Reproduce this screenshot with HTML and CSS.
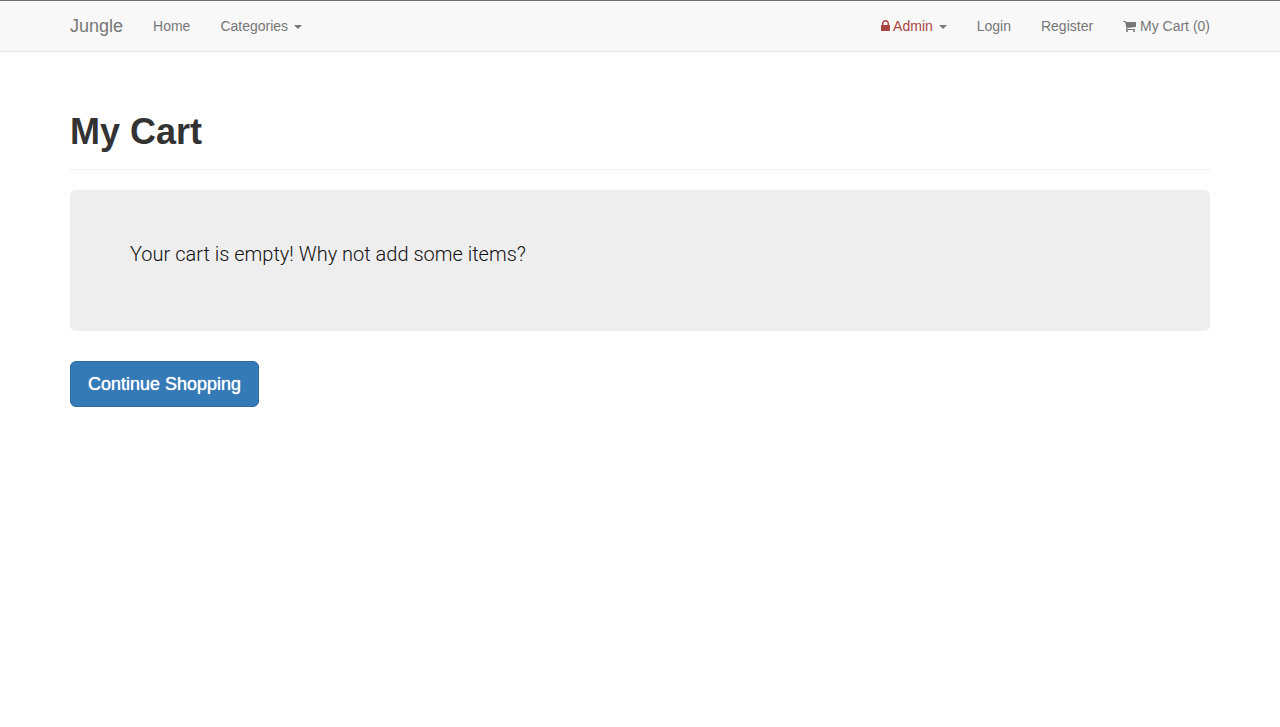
FILE: index.html
```
<!DOCTYPE html>
<html lang="en">
<head>
<meta charset="utf-8">
<meta name="viewport" content="width=device-width, initial-scale=1">
<title>Jungle</title>
<link rel="stylesheet" href="styles.css">
</head>
<body>
<nav class="navbar">
  <div class="container navbar-inner">
    <a class="brand" href="#">Jungle</a>
    <ul class="nav">
      <li><a href="#">Home</a></li>
      <li><a href="#">Categories <span class="caret"></span></a></li>
    </ul>
    <ul class="nav nav-right">
      <li><a href="#"><span class="admin"><svg class="icon-lock" viewBox="0 128 1152 1408" aria-hidden="true"><path d="M320 768h512v-192q0-106-75-181t-181-75-181 75-75 181v192zm832 96v576q0 40-28 68t-68 28h-960q-40 0-68-28t-28-68v-576q0-40 28-68t68-28h32v-192q0-184 132-316t316-132 316 132 132 316v192h32q40 0 68 28t28 68z"/></svg> Admin</span> <span class="caret"></span></a></li>
      <li><a href="#">Login</a></li>
      <li><a href="#">Register</a></li>
      <li><a href="#"><svg class="icon-cart" viewBox="64 256 1664 1408" aria-hidden="true"><path d="M704 1536q0 52-38 90t-90 38-90-38-38-90 38-90 90-38 90 38 38 90zm896 0q0 52-38 90t-90 38-90-38-38-90 38-90 90-38 90 38 38 90zm128-1088v512q0 24-16.500 42.500t-40.500 21.500l-1044 122q13 60 13 70 0 16-24 64h920q26 0 45 19t19 45-19 45-45 19h-1024q-26 0-45-19t-19-45q0-11 8-31.500t16-36 21.500-40 15.500-29.500l-177-823h-204q-26 0-45-19t-19-45 19-45 45-19h256q16 0 28.500 6.500t19.500 15.500 13 24.500 8 26 5.500 29.500 4.500 26h1201q26 0 45 19t19 45z"/></svg> My Cart (0)</a></li>
    </ul>
  </div>
</nav>
<main class="container">
  <header class="page-header">
    <h1>My Cart</h1>
  </header>
  <section class="jumbotron">
    <p>Your cart is empty! Why not add some items?</p>
  </section>
  <a class="button" href="#">Continue Shopping</a>
</main>
</body>
</html>
```
FILE: styles.css
```
* {
  box-sizing: border-box;
}

body {
  margin: 0;
  border-top: 1px solid #707070;
  background: #fff;
  color: #333;
  font: 14px/20px "Liberation Sans", Arial, sans-serif;
}

a {
  text-decoration: none;
}

.container {
  max-width: 1170px;
  margin: 0 auto;
  padding: 0 15px;
}

.navbar {
  background: #f8f8f8;
  border-bottom: 1px solid #e7e7e7;
}

.navbar-inner {
  display: flex;
}

.brand {
  padding: 15px 15px 15px 0;
  color: #777;
  font-size: 18px;
}

.nav {
  display: flex;
  margin: 0;
  padding: 0;
  list-style: none;
}

.nav a {
  display: block;
  padding: 15px;
  color: #777;
}

.nav-right {
  margin-left: auto;
  margin-right: -15px;
}

.caret {
  display: inline-block;
  margin-left: 2px;
  vertical-align: middle;
  border-top: 4px solid #777;
  border-left: 4px solid transparent;
  border-right: 4px solid transparent;
}

.admin {
  color: #a94442;
}

.icon-lock,
.icon-cart {
  height: 11px;
  fill: currentColor;
}

.icon-lock {
  width: 9px;
}

.icon-cart {
  width: 13px;
  vertical-align: -1px;
}

.page-header {
  margin: 60px 0 20px;
  padding-bottom: 17px;
  border-bottom: 1px solid #eee;
}

h1 {
  margin: 0;
  font-size: 36px;
  font-weight: bold;
  line-height: 40px;
}

.jumbotron {
  margin-bottom: 30px;
  padding: 48px 60px;
  border-radius: 6px;
  background: #eee;
}

.jumbotron p {
  margin: 0 0 13px;
  color: #111;
  font-family: Roboto, "Liberation Sans", sans-serif;
  font-size: 20px;
  font-weight: 300;
  line-height: 32px;
}

.button {
  display: inline-block;
  padding: 10px 17px;
  border: 1px solid #2e6da4;
  border-radius: 6px;
  background: #337ab7;
  color: #fff;
  font-size: 18px;
  line-height: 24px;
  text-shadow: 0 0 1px #fff;
}
```
